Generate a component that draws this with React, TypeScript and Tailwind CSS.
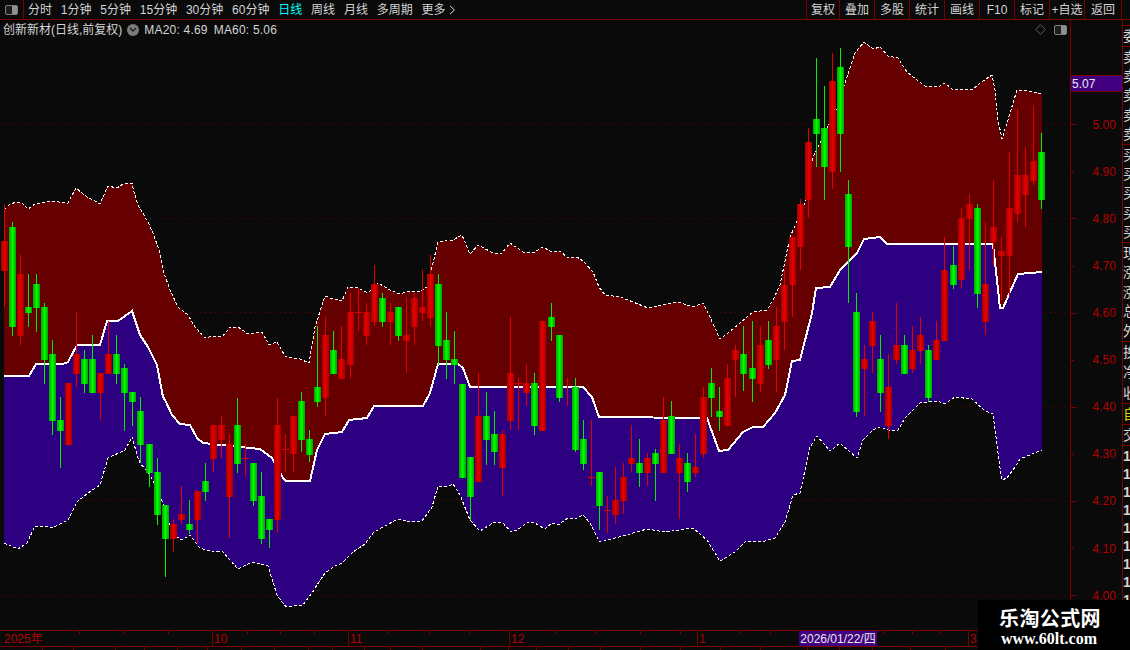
import React from "react";

type P = [number, number];
const upper: P[] = [[4,209],[5,209],[10,204],[17,202],[22,203],[28,209],[35,204],[42,203],[53,201],[65,203],[68,203],[76,188],[87,197],[93,200],[100,204],[103,197],[108,186],[117,188],[123,184],[132,183],[134,192],[138,205],[145,217],[148,222],[153,233],[159,250],[163,270],[170,290],[178,307],[188,315],[195,327],[205,338],[213,336],[222,337],[230,327],[238,327],[248,334],[262,332],[269,345],[277,342],[285,356],[293,358],[300,359],[309,363],[315,327],[325,296],[333,299],[342,301],[348,287],[358,288],[368,293],[378,283],[390,290],[400,294],[408,291],[420,292],[427,287],[433,263],[438,242],[453,240],[462,235],[470,254],[478,245],[493,253],[502,253],[510,243],[523,252],[533,253],[543,247],[552,252],[560,251],[568,258],[577,257],[583,261],[593,272],[599,287],[605,295],[620,297],[628,300],[648,308],[667,304],[678,302],[693,307],[703,303],[708,313],[720,339],[728,333],[740,323],[753,312],[767,310],[773,300],[780,285],[790,237],[805,203],[813,157],[837,108],[845,83],[855,53],[864,42],[873,49],[880,47],[888,56],[898,58],[907,72],[918,81],[925,86],[938,87],[945,83],[953,90],[965,89],[972,90],[980,83],[992,75],[995,90],[998,120],[1002,139],[1007,123],[1017,90],[1022,90],[1033,92],[1042,94]];
const mid: P[] = [[4,376],[29,376],[36,364],[63,364],[68,362],[77,345],[100,345],[107,321],[118,321],[132,311],[140,335],[148,347],[157,365],[163,397],[165,400],[172,415],[180,424],[190,425],[197,438],[203,443],[260,449],[272,458],[283,478],[286,481],[310,481],[317,450],[325,434],[342,432],[349,420],[367,418],[374,406],[423,406],[430,393],[438,364],[458,364],[463,368],[470,387],[583,387],[592,397],[599,417],[707,418],[719,451],[728,450],[743,432],[753,427],[763,427],[775,413],[785,395],[792,361],[800,360],[812,313],[816,288],[830,287],[840,270],[857,253],[864,239],[880,237],[887,244],[993,244],[1000,308],[1003,308],[1018,274],[1030,273],[1042,272]];
const lower: P[] = [[4,543],[18,549],[27,543],[35,526],[45,526],[52,528],[68,520],[77,502],[88,493],[100,485],[108,458],[125,450],[132,437],[138,458],[140,463],[150,475],[160,495],[170,525],[177,537],[182,540],[190,535],[200,548],[213,552],[222,551],[238,569],[252,562],[268,566],[277,595],[286,607],[300,605],[303,605],[312,593],[317,585],[325,573],[335,566],[342,563],[353,552],[365,544],[374,532],[385,526],[398,519],[410,522],[422,521],[432,507],[438,486],[447,487],[453,484],[460,495],[470,520],[480,531],[493,523],[502,522],[511,532],[517,530],[527,523],[533,522],[545,529],[552,523],[558,525],[568,518],[575,519],[583,515],[590,523],[597,537],[600,542],[623,536],[647,529],[665,532],[693,528],[707,540],[720,561],[735,552],[745,542],[765,541],[775,538],[785,522],[793,495],[800,493],[810,447],[817,436],[830,451],[840,443],[857,458],[863,440],[873,430],[880,427],[892,431],[898,430],[905,418],[920,403],[937,401],[945,404],[955,397],[972,399],[985,411],[993,414],[1000,468],[1002,480],[1007,478],[1013,470],[1020,459],[1042,450]];

// colour, body top, body bottom, wick top, wick bottom
type C = ["r" | "g", number, number, number, number];
const candles: C[] = [
["r",241,271,204,307],["g",227,327,222,336],["r",274,336,255,345],["g",307,313,274,327],["g",284,308,274,332],["g",307,360,303,384],["g",354,421,340,435],["g",420,431,397,468],["r",383,445,383,445],["r",354,374,312,387],
["g",359,384,350,393],["g",359,393,335,393],["r",373,393,373,420],["r",354,374,321,374],["g",354,374,335,384],["g",368,393,364,431],["g",392,402,392,426],["g",411,445,397,463],["g",444,473,444,487],["g",472,515,458,525],
["g",505,539,505,577],["r",524,539,519,552],["r",514,520,486,524],["g",524,530,500,534],["r",491,520,491,543],["g",481,492,463,501],["r",425,459,425,472],["r",425,440,416,458],["r",444,497,434,538],["g",425,464,398,473],
["r",458,459,444,477],["g",463,501,463,506],["g",496,539,472,544],["g",519,530,519,548],["r",425,520,398,533],["r",449,450,434,472],["r",416,454,416,472],["g",401,440,392,452],["g",439,455,430,462],["g",387,402,326,407],
["r",335,398,317,416],["g",350,374,331,374],["r",359,379,326,379],["r",312,365,293,378],["r",312,313,288,331],["r",312,336,303,345],["r",284,322,265,326],["g",298,322,293,327],["r",312,322,303,345],["g",307,336,307,341],
["r",335,341,298,373],["r",298,327,293,345],["r",307,313,270,321],["r",274,318,255,326],["g",284,346,274,365],["g",340,360,312,379],["g",359,365,331,384],["g",384,478,384,478],["g",457,497,457,520],["r",416,482,373,482],
["g",416,440,392,465],["g",434,452,411,465],["r",434,468,430,496],["r",373,421,317,430],["r",383,384,378,430],["r",383,393,364,406],["g",383,426,373,435],["r",321,431,321,431],["g",317,327,303,341],["g",335,398,335,402],
["r",390,390,378,406],["g",387,450,378,452],["g",439,464,420,470],["r",477,478,420,486],["g",472,506,472,530],["r",510,511,496,533],["r",500,515,467,524],["r",477,501,463,514],["r",458,464,425,472],["g",463,473,439,487],
["r",458,473,453,486],["g",453,464,449,501],["r",420,473,397,473],["g",416,454,401,454],["r",458,473,444,519],["g",463,482,453,492],["r",467,473,434,477],["r",397,454,387,458],["g",383,398,368,417],["g",411,417,387,431],
["r",378,426,364,426],["r",350,360,345,397],["g",354,374,326,391],["g",368,379,321,402],["r",345,384,326,392],["g",340,365,321,369],["r",326,360,307,392],["r",285,322,270,350],["r",237,285,237,317],["r",204,247,199,270],
["r",142,200,128,218],["g",119,134,58,167],["g",128,167,86,200],["r",81,172,53,189],["g",67,134,48,172],["g",194,247,180,303],["g",312,412,293,417],["r",359,369,345,416],["r",321,346,312,373],["g",359,393,335,412],
["r",387,426,354,439],["r",345,360,303,364],["g",345,374,335,374],["r",350,369,326,373],["r",335,351,317,364],["g",350,398,345,402],["r",340,360,321,360],["r",270,341,237,341],["g",265,285,246,289],["r",218,280,208,288],
["r",204,219,194,270],["g",208,294,204,308],["r",284,322,222,335],["r",227,242,180,265],["r",251,256,237,300],["r",208,256,152,297],["r",175,214,109,222],["r",175,195,147,227],["r",161,181,105,185],["g",152,200,133,209],
];

const pts = (a: P[]) => a.map((p) => p.join(",")).join(" ");
const rev = (a: P[]) => [...a].reverse();

function Chart() {
  return (
    <svg width="1070" height="610" viewBox="0 20 1070 610" className="block" shapeRendering="crispEdges">
      <defs>
        <linearGradient id="gb"><stop offset="0" stopColor="#00a400" /><stop offset="0.5" stopColor="#00ff00" /><stop offset="1" stopColor="#00a400" /></linearGradient>
        <linearGradient id="rb"><stop offset="0" stopColor="#a00000" /><stop offset="0.5" stopColor="#e80000" /><stop offset="1" stopColor="#a00000" /></linearGradient>
      </defs>
      {[124, 218, 312, 406, 500, 595].map((y) => (
        <line key={y} x1="0" x2="1070" y1={y + 0.5} y2={y + 0.5} stroke="#6a0000" strokeDasharray="1 4" />
      ))}
      <polygon points={pts([...upper, ...rev(mid)])} fill="#660000" />
      <polygon points={pts([...mid, ...rev(lower)])} fill="#2d0082" />
      <polyline points={pts(upper)} fill="none" stroke="#ffffff" strokeDasharray="3 2" />
      <polyline points={pts(lower)} fill="none" stroke="#ffffff" strokeDasharray="3 2" />
      <polyline points={pts(mid)} fill="none" stroke="#ffffff" strokeWidth="2" />
      {candles.map(([c, bt, bb, wt, wb], i) => {
        const x = Math.round(0.8 + 8.04 * i);
        const h = bb - bt;
        return (
          <g key={i}>
            <rect x={x + 3} y={wt} width="1" height={wb - wt} fill={c === "r" ? "#e00000" : "#00f000"} />
            {h > 0 && (h <= 1 ? (
              <rect x={x} y={bt} width="7" height="1" fill={c === "r" ? "#e00000" : "#00f000"} />
            ) : (
              <rect x={x} y={bt} width="7" height={h} fill={c === "r" ? "url(#rb)" : "url(#gb)"} />
            ))}
          </g>
        );
      })}
    </svg>
  );
}

const leftNav = ["分时", "1分钟", "5分钟", "15分钟", "30分钟", "60分钟", "日线", "周线", "月线", "多周期"];
const rightNav: [string, string][] = [["复权", "w-[33px]"], ["叠加", "w-[35px]"], ["多股", "w-[35px]"], ["统计", "w-[35px]"], ["画线", "w-[35px]"], ["F10", "w-[35px]"], ["标记", "w-[35px]"], ["+自选", "w-[35px]"], ["返回", "w-[37px]"]];

function PanelIcon() {
  return (
    <div className="flex h-[10px] w-[13px] rounded-[2px] border border-[#808080] bg-[#1c1c1c]">
      <div className="flex-1" />
      <div className="w-[5px] bg-[#909090]" />
    </div>
  );
}

const prices = ["5.00", "4.90", "4.80", "4.70", "4.60", "4.50", "4.40", "4.30", "4.20", "4.10", "4.00"];

const sideGroups: { rows: string[]; h: string; cls?: string }[] = [
  { rows: ["委比"], h: "h-[20px]" },
  { rows: ["卖五", "卖四", "卖三", "卖二", "卖一"], h: "h-[19.4px]" },
  { rows: ["买一", "买二", "买三", "买四", "买五"], h: "h-[19.4px]" },
  { rows: ["现价", "涨跌", "涨幅", "总量", "外盘"], h: "h-[19.6px]" },
  { rows: ["换手", "净资", "收益"], h: "h-[20.3px]" },
  { rows: ["自选"], h: "h-[20px]", cls: "text-[#d8d800]" },
  { rows: ["交易"], h: "h-[20px]" },
];

const axisCells: [string, string][] = [["2025年", "w-[212px]"], ["10", "w-[136px]"], ["11", "w-[161px]"], ["12", "w-[188px]"], ["1", "w-[271px]"], ["3", "flex-1"]];
const timeTicks = [79, 124, 168, 247, 280, 314, 388, 429, 469, 555, 595, 640, 680, 740, 770, 825, 883, 912, 940];
const tabDividers = [42, 73, 115, 144, 177, 207, 241, 274, 308, 332, 364, 390, 422, 480, 508, 536, 568, 600, 640, 680, 720, 760, 807, 839, 872, 910, 945];

export default function App() {
  return (
    <div className="relative flex h-[650px] w-[1130px] flex-col overflow-hidden bg-[#0a0a0a] font-['Liberation_Sans','Noto_Sans_CJK_SC',sans-serif] text-[12px] text-[#d4d4d4]">
      {/* top toolbar */}
      <div className="flex h-[20px] shrink-0 items-stretch border-b border-[#7a0000]">
        <div className="flex w-[24px] items-center justify-center border-r border-[#7a0000] pr-[1px]">
          <PanelIcon />
        </div>
        <div className="flex items-center gap-[8.8px] pl-[4px]">
          {leftNav.map((t) => (
            <span key={t} className={t === "日线" ? "text-[#00ffff]" : ""}>{t}</span>
          ))}
          <span className="flex items-center gap-[3px]">
            更多
            <svg width="7" height="10" viewBox="0 0 7 10" fill="none" stroke="#d4d4d4"><path d="M1 1l4.5 4L1 9" /></svg>
          </span>
        </div>
        <div className="flex-1" />
        <div className="flex">
          {rightNav.map(([t, w]) => (
            <div key={t} className={`flex items-center justify-center border-l border-[#7a0000] ${w}`}>{t}</div>
          ))}
        </div>
        <div className="w-[9px] border-l border-[#7a0000]" />
      </div>

      {/* main row */}
      <div className="flex h-[610px] shrink-0">
        <div className="relative w-[1070px]">
          <Chart />
          <div className="absolute left-[3px] right-[3px] top-0 flex h-[19px] items-center">
            <span>创新新材(日线,前复权)</span>
            <span className="ml-[5px] flex h-[12px] w-[12px] items-center justify-center rounded-full bg-[#7c7c7c]">
              <svg width="8" height="6" viewBox="0 0 8 6" fill="none" stroke="#1a1a1a" strokeWidth="1.4"><path d="M1 1l3 3 3-3" /></svg>
            </span>
            <span className="ml-[5px] tracking-[0.2px]">MA20: 4.69</span>
            <span className="ml-[6px] tracking-[0.2px]">MA60: 5.06</span>
            <div className="flex-1" />
            <svg width="11" height="11" viewBox="0 0 11 11" fill="none" stroke="#5f5f5f"><path d="M5.5 .7L10.3 5.5 5.5 10.3 .7 5.5z" /></svg>
            <div className="ml-[8px]"><PanelIcon /></div>
          </div>
        </div>

        {/* price axis */}
        <div className="flex w-[52px] flex-col border-l border-[#7a0000]">
          <div className="mt-[55px] flex h-[17px] items-center border-y border-[#7a0000] bg-[#400080] pl-[1px] text-[#e8e8e8]">5.07</div>
          <div className="mt-[9.2px] flex flex-col">
            {prices.map((p, i) => (
              <div key={p} className="flex h-[47.1px] items-center text-[#b40000]">
                <div className={`h-px bg-[#7a0000] ${i % 2 === 0 ? "w-[6px]" : "w-[3px]"}`} />
                <span className={i % 2 === 0 ? "ml-[15.5px]" : "ml-[18.5px]"}>{p}</span>
              </div>
            ))}
          </div>
        </div>

        {/* clipped side panel */}
        <div className="flex w-[8px] flex-col overflow-hidden border-l border-[#7a0000] text-[14px] leading-none text-[#d4d4d4]">
          <div className="h-[5px] shrink-0" />
          {sideGroups.map((g) => (
            <div key={g.rows[0]} className={`shrink-0 border-t border-[#7a0000] ${g.cls ?? ""}`}>
              {g.rows.map((r) => (
                <div key={r} className={`flex items-center whitespace-nowrap ${g.h}`}>{r}</div>
              ))}
            </div>
          ))}
          <div className="shrink-0 border-t border-[#7a0000] pt-[1px] font-bold">
            {["10:21", "10:25", "10:31", "10:37", "10:42", "10:46", "10:52", "10:58", "11:04"].map((r) => (
              <div key={r} className="flex h-[18px] items-center whitespace-nowrap">{r}</div>
            ))}
          </div>
        </div>
      </div>

      {/* time axis */}
      <div className="relative flex h-[17px] shrink-0 border-y border-[#7a0000] text-[#b40000]">
        {axisCells.map(([t, w], i) => (
          <div key={t} className={`flex items-center ${w} ${i > 0 ? "border-l border-[#7a0000] pl-[1px]" : "pl-[4px]"}`}>{t}</div>
        ))}
        <svg width="1130" height="3" className="absolute left-0 top-0" shapeRendering="crispEdges">
          {timeTicks.map((x) => (
            <rect key={x} x={x} y="0" width="1" height="3" fill="#7a0000" />
          ))}
        </svg>
        <div className="absolute left-[799px] top-0 flex h-[15px] w-[78px] items-center justify-center bg-[#400080] text-[#e8e8e8]">2026/01/22/四</div>
      </div>

      {/* bottom tabs, cut off by the window */}
      <svg width="1130" height="3" className="block shrink-0" shapeRendering="crispEdges">
        {tabDividers.map((x) => (
          <rect key={x} x={x} y="0" width="1" height="3" fill="#7a0000" />
        ))}
      </svg>

      {/* watermark */}
      <div className="absolute bottom-0 right-0 flex h-[50px] w-[152px] flex-col items-start bg-black pl-[21px] pt-[6px] text-white">
        <span className="text-[20px] font-bold leading-[24px] tracking-[0.4px] font-['Noto_Sans_CJK_SC',sans-serif]">乐淘公式网</span>
        <span className="ml-[2px] text-[16px] font-bold leading-[17px] font-['Liberation_Serif',serif]">www.60lt.com</span>
      </div>
    </div>
  );
}
